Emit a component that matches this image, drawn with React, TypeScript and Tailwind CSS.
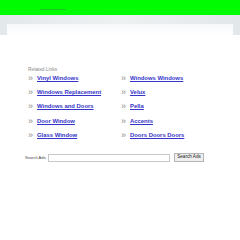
export default function App() {
  const left = ["Vinyl Windows", "Windows Replacement", "Windows and Doors", "Door Window", "Glass Window"];
  const right = ["Windows Windows", "Velux", "Pella", "Accents", "Doors Doors Doors"];
  const Item = ({ t }: { t: string }) => (
    <div className="flex items-center h-[14.25px]">
      <span className="text-[#8c8c8c] text-[9px] w-[9px] leading-none -mt-[1px]" style={{ fontFamily: "'Liberation Sans', sans-serif" }}>»</span>
      <a href="#" className="text-[#3434c8] font-bold underline text-[5.9px] leading-none" style={{ fontFamily: "'Liberation Sans', sans-serif" }}>{t}</a>
    </div>
  );
  return (
    <div className="w-[240px] h-[240px] bg-white relative overflow-hidden" style={{ fontFamily: "'Liberation Sans', sans-serif" }}>
      <div className="h-[15px] bg-[#00fc00] relative">
        <div className="absolute left-[40px] top-[9px] w-[26px] h-px bg-[#2aa52a] opacity-60" />
      </div>
      <div className="h-[20px] bg-gradient-to-r from-[#e3e8eb] via-[#eef1f2] to-[#e2e7ea] px-[7px] pt-[9px] flex">
        <div className="flex-1 bg-gradient-to-b from-[#f6f8f9] to-white" />
      </div>
      <div className="mx-[28px] mt-[33px]">
        <div className="text-[#8a8a8a] text-[4.8px] leading-none">Related Links</div>
        <div className="grid grid-cols-[93px_1fr] -mt-[1px]">
          <div>{left.map((t) => <Item key={t} t={t} />)}</div>
          <div>{right.map((t) => <Item key={t} t={t} />)}</div>
        </div>
      </div>
      <div className="flex items-center ml-[25px] mt-[10px]">
        <span className="text-[#444] text-[4px] w-[23px]">Search Ads:</span>
        <div className="w-[122px] h-[8px] border border-[#c8c8c8] bg-white" />
        <div className="ml-[4px] h-[9px] w-[30px] border border-[#b5b5b5] bg-[#efefef] text-[4.6px] text-[#222] flex items-center justify-center leading-none">Search Ads</div>
      </div>
    </div>
  );
}
